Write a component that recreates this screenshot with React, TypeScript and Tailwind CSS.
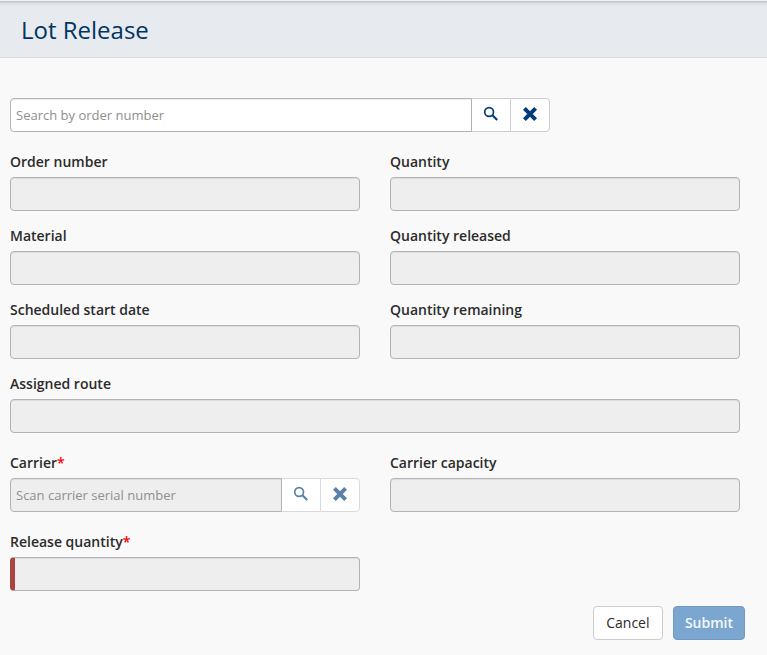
import type { ReactNode } from "react";

const inputBase =
  "block h-[34px] w-full min-w-0 border border-[#b3b3b3] px-[5px] text-[13px] leading-5 text-[#2b2b2b] placeholder:text-[#8f8f8f] placeholder:opacity-100 shadow-[inset_0_1px_1px_rgba(0,0,0,0.075)] outline-none";

function Label({ id, required, children }: { id: string; required?: boolean; children: ReactNode }) {
  return (
    <label htmlFor={id} className="mb-[5px] block text-sm leading-5 font-semibold text-[#2b2b2b]">
      {children}
      {required && <span className="text-[#ff0000]">*</span>}
    </label>
  );
}

function ReadOnlyField({ id, label, className = "" }: { id: string; label: string; className?: string }) {
  return (
    <div className={className}>
      <Label id={id}>{label}</Label>
      <input id={id} type="text" disabled className={`${inputBase} rounded bg-[#eeeeee]`} />
    </div>
  );
}

function SearchIcon() {
  return (
    <svg viewBox="0 0 16 16" className="size-4" fill="none" stroke="currentColor" aria-hidden="true">
      <circle cx="6.1" cy="6" r="4.4" strokeWidth="1.7" />
      <path d="M9.2 9.1L14.2 14" strokeWidth="2.1" />
    </svg>
  );
}

function ClearIcon() {
  return (
    <svg viewBox="0 0 16 16" className="size-4" fill="none" stroke="currentColor" aria-hidden="true">
      <path d="M2.4 2.4L13.6 13.6M13.6 2.4L2.4 13.6" strokeWidth="4" />
    </svg>
  );
}

function LookupField({
  id,
  placeholder,
  label,
  disabled,
}: {
  id: string;
  placeholder: string;
  label?: string;
  disabled?: boolean;
}) {
  const tone = disabled ? "border-[#dadada] text-[#5a81a9]" : "border-[#cccccc] text-[#003d78]";
  const button = `flex h-[34px] w-10 shrink-0 items-center justify-center border bg-white pb-0.5 -ml-px ${tone}`;
  return (
    <div className="flex">
      <input
        id={id}
        type="text"
        aria-label={label}
        placeholder={placeholder}
        disabled={disabled}
        className={`${inputBase} relative z-10 flex-1 rounded-l ${disabled ? "bg-[#eeeeee]" : "bg-white"}`}
      />
      <button type="button" aria-label="Search" disabled={disabled} className={button}>
        <SearchIcon />
      </button>
      <button type="button" aria-label="Clear" disabled={disabled} className={`${button} rounded-r`}>
        <ClearIcon />
      </button>
    </div>
  );
}

export default function App() {
  return (
    <div className="min-h-screen bg-[#f9f9f9] font-['Open_Sans','Noto_Sans',sans-serif] text-[#2b2b2b]">
      <header className="border-b border-[#d5dde4] bg-[#e7ebf0] bg-[linear-gradient(#f0f1f2_0px,#f0f1f2_1px,#bfc2c5_1px,#d9dce0_3px,#e7ebf0_6px)] px-[21px] pt-[14px] pb-[11px]">
        <h1 className="text-2xl leading-8 text-[#003462]">Lot Release</h1>
      </header>
      <form className="pt-10 pr-[27px] pb-[15px] pl-[10px]" onSubmit={(event) => event.preventDefault()}>
        <div className="mb-5 max-w-[540px]">
          <LookupField id="order-search" label="Search by order number" placeholder="Search by order number" />
        </div>
        <div className="grid grid-cols-2 gap-x-[30px] gap-y-[15px]">
          <ReadOnlyField id="order-number" label="Order number" />
          <ReadOnlyField id="quantity" label="Quantity" />
          <ReadOnlyField id="material" label="Material" />
          <ReadOnlyField id="quantity-released" label="Quantity released" />
          <ReadOnlyField id="start-date" label="Scheduled start date" />
          <ReadOnlyField id="quantity-remaining" label="Quantity remaining" />
          <ReadOnlyField id="route" label="Assigned route" className="col-span-2" />
        </div>
        <div className="mt-5 grid grid-cols-2 gap-x-[30px] gap-y-5">
          <div>
            <Label id="carrier" required>
              Carrier
            </Label>
            <LookupField id="carrier" placeholder="Scan carrier serial number" disabled />
          </div>
          <ReadOnlyField id="carrier-capacity" label="Carrier capacity" />
          <div>
            <Label id="release-quantity" required>
              Release quantity
            </Label>
            <input
              id="release-quantity"
              type="text"
              disabled
              required
              className={`${inputBase} rounded border-l-[5px] border-l-[#a94442] bg-[#eeeeee]`}
            />
          </div>
        </div>
        <div className="mt-[15px] -mr-[5px] flex justify-end gap-[10px] text-sm leading-5">
          <button type="button" className="h-[34px] min-w-[70px] rounded border border-[#cccccc] bg-white px-3">
            Cancel
          </button>
          <button
            type="submit"
            disabled
            className="h-[34px] min-w-[72px] rounded border border-[#7099c4] bg-[#7aa6d0] px-[11px] font-semibold text-[#f4f8fc]"
          >
            Submit
          </button>
        </div>
      </form>
    </div>
  );
}
